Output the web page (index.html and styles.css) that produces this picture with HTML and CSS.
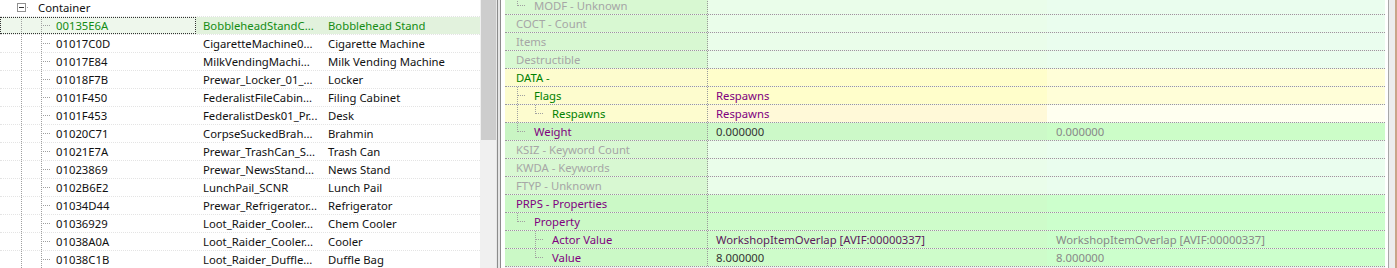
FILE: index.html
```html
<!DOCTYPE html>
<html lang="en">
<head>
    <meta charset="UTF-8">
    <title>Records</title>
    <link rel="stylesheet" href="styles.css">
</head>
<body>
    <div class="app">
        <div class="left">
            <div class="tree">
                <div class="trow">
                    <div class="c1"><span class="g g-box"><span class="box"></span></span><span class="t t-root">Container</span></div>
                    <div class="c2"></div>
                    <div class="c3"></div>
                </div>
                <div class="trow sel">
                    <div class="c1"><span class="g g-pipe"></span><span class="g g-tee"></span><span class="t">00135E6A</span></div>
                    <div class="c2">BobbleheadStandC...</div>
                    <div class="c3">Bobblehead Stand</div>
                </div>
                <div class="trow">
                    <div class="c1"><span class="g g-pipe"></span><span class="g g-tee"></span><span class="t">01017C0D</span></div>
                    <div class="c2">CigaretteMachine0...</div>
                    <div class="c3">Cigarette Machine</div>
                </div>
                <div class="trow">
                    <div class="c1"><span class="g g-pipe"></span><span class="g g-tee"></span><span class="t">01017E84</span></div>
                    <div class="c2">MilkVendingMachi...</div>
                    <div class="c3">Milk Vending Machine</div>
                </div>
                <div class="trow">
                    <div class="c1"><span class="g g-pipe"></span><span class="g g-tee"></span><span class="t">01018F7B</span></div>
                    <div class="c2">Prewar_Locker_01_...</div>
                    <div class="c3">Locker</div>
                </div>
                <div class="trow">
                    <div class="c1"><span class="g g-pipe"></span><span class="g g-tee"></span><span class="t">0101F450</span></div>
                    <div class="c2">FederalistFileCabin...</div>
                    <div class="c3">Filing Cabinet</div>
                </div>
                <div class="trow">
                    <div class="c1"><span class="g g-pipe"></span><span class="g g-tee"></span><span class="t">0101F453</span></div>
                    <div class="c2">FederalistDesk01_Pr...</div>
                    <div class="c3">Desk</div>
                </div>
                <div class="trow">
                    <div class="c1"><span class="g g-pipe"></span><span class="g g-tee"></span><span class="t">01020C71</span></div>
                    <div class="c2">CorpseSuckedBrah...</div>
                    <div class="c3">Brahmin</div>
                </div>
                <div class="trow">
                    <div class="c1"><span class="g g-pipe"></span><span class="g g-tee"></span><span class="t">01021E7A</span></div>
                    <div class="c2">Prewar_TrashCan_S...</div>
                    <div class="c3">Trash Can</div>
                </div>
                <div class="trow">
                    <div class="c1"><span class="g g-pipe"></span><span class="g g-tee"></span><span class="t">01023869</span></div>
                    <div class="c2">Prewar_NewsStand...</div>
                    <div class="c3">News Stand</div>
                </div>
                <div class="trow">
                    <div class="c1"><span class="g g-pipe"></span><span class="g g-tee"></span><span class="t">0102B6E2</span></div>
                    <div class="c2">LunchPail_SCNR</div>
                    <div class="c3">Lunch Pail</div>
                </div>
                <div class="trow">
                    <div class="c1"><span class="g g-pipe"></span><span class="g g-tee"></span><span class="t">01034D44</span></div>
                    <div class="c2">Prewar_Refrigerator...</div>
                    <div class="c3">Refrigerator</div>
                </div>
                <div class="trow">
                    <div class="c1"><span class="g g-pipe"></span><span class="g g-tee"></span><span class="t">01036929</span></div>
                    <div class="c2">Loot_Raider_Cooler...</div>
                    <div class="c3">Chem Cooler</div>
                </div>
                <div class="trow">
                    <div class="c1"><span class="g g-pipe"></span><span class="g g-tee"></span><span class="t">01038A0A</span></div>
                    <div class="c2">Loot_Raider_Cooler...</div>
                    <div class="c3">Cooler</div>
                </div>
                <div class="trow">
                    <div class="c1"><span class="g g-pipe"></span><span class="g g-tee"></span><span class="t">01038C1B</span></div>
                    <div class="c2">Loot_Raider_Duffle...</div>
                    <div class="c3">Duffle Bag</div>
                </div>
            </div>
        </div>
        <div class="vscroll"><div class="thumb"></div></div>
        <div class="split"></div>

        <div class="right">
            <div class="prow r-gray">
                <div class="c1"><span class="g g-end"></span><span class="t">MODF - Unknown</span></div>
                <div class="c2"></div><div class="c3"></div>
            </div>
            <div class="prow r-gray">
                <div class="c1"><span class="t t-root">COCT - Count</span></div>
                <div class="c2"></div><div class="c3"></div>
            </div>
            <div class="prow r-gray">
                <div class="c1"><span class="t t-root">Items</span></div>
                <div class="c2"></div><div class="c3"></div>
            </div>
            <div class="prow r-gray">
                <div class="c1"><span class="t t-root">Destructible</span></div>
                <div class="c2"></div><div class="c3"></div>
            </div>
            <div class="prow r-yellow green-text">
                <div class="c1"><span class="t t-root">DATA -</span></div>
                <div class="c2"></div><div class="c3"></div>
            </div>
            <div class="prow r-yellow green-text">
                <div class="c1"><span class="g g-tee"></span><span class="t">Flags</span></div>
                <div class="c2 v-purple">Respawns</div><div class="c3"></div>
            </div>
            <div class="prow r-pale green-text">
                <div class="c1"><span class="g g-pipe"></span><span class="g g-end"></span><span class="t">Respawns</span></div>
                <div class="c2 v-purple">Respawns</div><div class="c3"></div>
            </div>
            <div class="prow r-weight purple-text">
                <div class="c1"><span class="g g-end"></span><span class="t">Weight</span></div>
                <div class="c2 v-dark">0.000000</div><div class="c3">0.000000</div>
            </div>
            <div class="prow r-gray">
                <div class="c1"><span class="t t-root">KSIZ - Keyword Count</span></div>
                <div class="c2"></div><div class="c3"></div>
            </div>
            <div class="prow r-gray">
                <div class="c1"><span class="t t-root">KWDA - Keywords</span></div>
                <div class="c2"></div><div class="c3"></div>
            </div>
            <div class="prow r-gray">
                <div class="c1"><span class="t t-root">FTYP - Unknown</span></div>
                <div class="c2"></div><div class="c3"></div>
            </div>
            <div class="prow r-green purple-text">
                <div class="c1"><span class="t t-root">PRPS - Properties</span></div>
                <div class="c2"></div><div class="c3"></div>
            </div>
            <div class="prow r-green purple-text">
                <div class="c1"><span class="g g-end"></span><span class="t">Property</span></div>
                <div class="c2"></div><div class="c3"></div>
            </div>
            <div class="prow r-green purple-text">
                <div class="c1"><span class="g"></span><span class="g g-tee"></span><span class="t">Actor Value</span></div>
                <div class="c2 v-plum">WorkshopItemOverlap [AVIF:00000337]</div><div class="c3">WorkshopItemOverlap [AVIF:00000337]</div>
            </div>
            <div class="prow r-green purple-text">
                <div class="c1"><span class="g"></span><span class="g g-end"></span><span class="t">Value</span></div>
                <div class="c2 v-dark">8.000000</div><div class="c3">8.000000</div>
            </div>
        </div>
        <div class="edge"></div>
    </div>
</body>
</html>
```

FILE: styles.css
```css
:root {
    --line: #a0a0a0;
    --grid: #9a9a9a;
    --green: #008000;
    --purple: #800080;
}

* {
    margin: 0;
    padding: 0;
    box-sizing: border-box;
}

body {
    font-family: 'Noto Sans', 'Open Sans', sans-serif;
    font-size: 11.3px;
    background: #f0f0f0;
    overflow: hidden;
}

.app {
    display: flex;
    height: 268px;
    overflow: hidden;
}

/* left record tree */
.left {
    width: 480px;
    flex: none;
    background: #fff;
    overflow: hidden;
}

.tree {
    margin-top: -1px;
}

.trow {
    display: flex;
    height: 18px;
    border-bottom: 1px dotted #e4e4e4;
    line-height: 17px;
    color: #111;
    white-space: nowrap;
}

.trow .c1 {
    width: 196px;
    display: flex;
    padding-left: 11px;
}

.trow .c2 {
    width: 126px;
    padding-left: 7px;
    overflow: hidden;
}

.trow .c3 {
    width: 158px;
    padding-left: 6px;
    overflow: hidden;
}

.trow .g {
    width: 20px;
    background-position-x: 10px;
}

.trow .t {
    margin-left: 5px;
}

.trow .t-root {
    margin-left: 7px;
}

.trow.sel {
    color: #148c14;
}

.trow.sel .c1 {
    background: #eef7ec;
    outline: 1px dotted #333;
    outline-offset: -1px;
}

.trow.sel .c2,
.trow.sel .c3 {
    background: #e2f2dd;
}

/* tree guide lines */
.g {
    flex: none;
    align-self: stretch;
    display: flex;
    align-items: center;
    justify-content: center;
}

.g-pipe {
    background: repeating-linear-gradient(to bottom, var(--line) 0 1px, transparent 1px 2px) 10px 0 / 1px 100% no-repeat;
}

.g-tee {
    background:
        repeating-linear-gradient(to bottom, var(--line) 0 1px, transparent 1px 2px) 10px 0 / 1px 100% no-repeat,
        repeating-linear-gradient(to right, var(--line) 0 1px, transparent 1px 2px) 11px 8px / 9px 1px no-repeat;
}

.g-end {
    background:
        repeating-linear-gradient(to bottom, var(--line) 0 1px, transparent 1px 2px) 10px 0 / 1px 9px no-repeat,
        repeating-linear-gradient(to right, var(--line) 0 1px, transparent 1px 2px) 11px 8px / 9px 1px no-repeat;
}

.g-box {
    background: repeating-linear-gradient(to right, var(--line) 0 1px, transparent 1px 2px) 15px 8px / 7px 1px no-repeat;
}

.box {
    width: 9px;
    height: 9px;
    border: 1px solid #919191;
    background: linear-gradient(#333, #333) center / 5px 1px no-repeat, #fff;
}

/* scrollbar and splitter */
.vscroll {
    width: 16px;
    flex: none;
    background: #f0f0f0;
    padding-left: 1px;
}

.thumb {
    height: 140px;
    background: #cdcdcd;
}

.split {
    width: 9px;
    flex: none;
    background:
        linear-gradient(#8c8c8c, #8c8c8c) 1px 0 / 1px 100% no-repeat,
        linear-gradient(#8c8c8c, #8c8c8c) 4px 0 / 1px 100% no-repeat,
        linear-gradient(#fff, #fff) 5px 0 / 4px 100% no-repeat,
        #e6e6e6;
}

/* right property grid */
.right {
    width: 880px;
    flex: none;
    overflow: hidden;
    margin-top: -3px;
}

.prow {
    display: flex;
    height: 18px;
    border-bottom: 1px dotted var(--grid);
    line-height: 17px;
    white-space: nowrap;
}

.prow .c1 {
    width: 203px;
    display: flex;
    padding-left: 3px;
    border-right: 1px dotted var(--grid);
}

.prow .c2 {
    width: 339px;
    padding-left: 8px;
}

.prow .c3 {
    width: 338px;
    padding-left: 9px;
    color: #888;
}

.prow .g {
    width: 18px;
    background-position-x: 9px;
}

.prow .g-tee,
.prow .g-end {
    background-position: 9px 0, 10px 8px;
}

.prow .t {
    margin-left: 8px;
}

.r-gray { color: #a6a6a6; }
.r-gray .c1 { background: #d8f8d2; }
.r-gray .c2 { background: #eafdea; }
.r-gray .c3 { background: #eafdee; }

.r-yellow .c1 { background: #fdfcce; }
.r-yellow .c2 { background: #fffecb; }
.r-yellow .c3 { background: #fffed8; }

.r-pale .c1 { background: #fdfccf; }
.r-pale .c2 { background: #fff9d8; }
.r-pale .c3 { background: #fffff0; }

.r-weight .c1 { background: #c9f5c3; }
.r-weight .c2 { background: #ccf9c8; }
.r-weight .c3 { background: #ccfdc8; }

.r-green .c1 { background: #cbf9c6; }
.r-green .c2 { background: #cefcca; }
.r-green .c3 { background: #ccffcc; }

.green-text { color: var(--green); }
.purple-text { color: var(--purple); }

.v-purple { color: var(--purple); }
.v-dark { color: #333; }
.v-plum { color: #5c1a5c; }

.edge {
    flex: 1;
    background:
        linear-gradient(#fff, #fff) 0 0 / 3px 100% no-repeat,
        linear-gradient(#a8a8a8, #a8a8a8) 3px 0 / 1px 100% no-repeat,
        linear-gradient(#c9a488, #c9a488) right 0 top 0 / 2px 100% no-repeat,
        #ececec;
}
```
